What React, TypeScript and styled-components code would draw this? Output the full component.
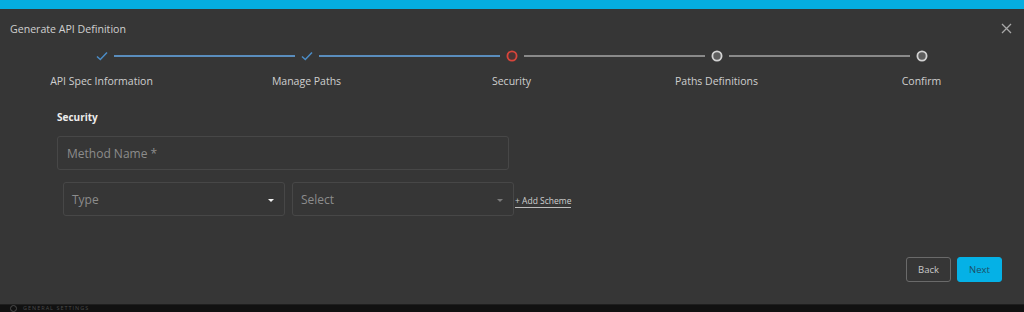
import React from 'react'
import styled, { createGlobalStyle } from 'styled-components'

const GlobalStyle = createGlobalStyle`
  html, body {
    margin: 0;
    padding: 0;
    background: #0d0d0d;
  }
  body {
    font-family: 'Open Sans', 'Noto Sans', sans-serif;
  }
`

const Page = styled.div`
  display: flex;
  flex-direction: column;
  width: 1024px;
  height: 312px;
  overflow: hidden;
`

const TopBar = styled.div`
  height: 9px;
  flex-shrink: 0;
  background: #05ade0;
`

const Dialog = styled.div`
  flex: 1;
  display: flex;
  flex-direction: column;
  background: #363636;
  color: #d6d6d6;
`

const DialogHeader = styled.div`
  display: flex;
  justify-content: space-between;
  align-items: center;
  height: 20px;
  padding: 10px 12px 0 10px;
`

const DialogTitle = styled.div`
  font-size: 10.6px;
  color: #d0d0d0;
`

const CloseButton = styled.button`
  display: flex;
  padding: 0;
  margin-top: -2px;
  border: none;
  background: none;
  cursor: pointer;
`

const Stepper = styled.div`
  display: grid;
  grid-template-columns: repeat(5, 205px);
  margin-left: -1px;
  margin-top: 11px;
`

const Step = styled.div`
  display: flex;
  flex-direction: column;
  align-items: center;
`

const StepTrack = styled.div`
  display: flex;
  align-items: center;
  width: 100%;
  height: 12px;
`

const Connector = styled.div<{ $active: boolean; $hidden: boolean }>`
  flex: 1;
  height: 2px;
  background: ${(p) => (p.$hidden ? 'transparent' : p.$active ? '#5a8dbd' : '#8a8a8a')};
`

const IconSlot = styled.div`
  display: flex;
  align-items: center;
  justify-content: center;
  width: 24px;
  height: 12px;
`

const StepLabel = styled.div`
  margin-top: 12px;
  font-size: 10.5px;
  color: #cfcfcf;
`

const Form = styled.div`
  display: flex;
  flex-direction: column;
  padding: 22px 0 0 57px;
`

const SectionTitle = styled.div`
  font-size: 10px;
  font-weight: 700;
  color: #ececec;
`

const TextInput = styled.div`
  display: flex;
  align-items: center;
  box-sizing: border-box;
  width: 452px;
  height: 34px;
  margin-top: 12px;
  padding-left: 9px;
  border: 1px solid #474747;
  border-radius: 3px;
  font-size: 12px;
  color: #8c8c8c;
`

const SchemeRow = styled.div`
  display: flex;
  align-items: center;
  gap: 7px;
  margin-top: 12px;
  margin-left: 6px;
`

const SelectBox = styled.div`
  display: flex;
  align-items: center;
  justify-content: space-between;
  box-sizing: border-box;
  width: 222px;
  height: 34px;
  padding: 0 10px 0 8px;
  border: 1px solid #474747;
  border-radius: 3px;
  font-size: 12px;
  color: #8c8c8c;
`

const Caret = styled.span<{ $bright: boolean }>`
  width: 0;
  height: 0;
  border-left: 3.5px solid transparent;
  border-right: 3.5px solid transparent;
  border-top: 3.5px solid ${(p) => (p.$bright ? '#f2f2f2' : '#7a7a7a')};
  margin-top: 2px;
`

const AddScheme = styled.span`
  align-self: center;
  margin: 4px 0 0 -6px;
  padding-bottom: 1px;
  border-bottom: 1px solid #bdbdbd;
  font-size: 8.5px;
  color: #cfcfcf;
  cursor: pointer;
`

const Actions = styled.div`
  display: flex;
  justify-content: flex-end;
  gap: 6px;
  margin-top: auto;
  padding: 0 22px 22px 0;
`

const ActionButton = styled.button<{ $primary?: boolean }>`
  box-sizing: border-box;
  width: 45px;
  height: 25px;
  border-radius: 3px;
  font-family: inherit;
  font-size: 9.5px;
  cursor: pointer;
  border: 1px solid ${(p) => (p.$primary ? '#05b1e6' : '#6a6a6a')};
  background: ${(p) => (p.$primary ? '#05b1e6' : 'transparent')};
  color: ${(p) => (p.$primary ? '#1d4f66' : '#c9c9c9')};
`

const Footer = styled.div`
  display: flex;
  align-items: center;
  gap: 6px;
  height: 8px;
  flex-shrink: 0;
  overflow: hidden;
  background: #111;
  border-top: 1px solid #1e1e1e;
  box-sizing: border-box;
  padding-left: 10px;
  font-size: 5.5px;
  letter-spacing: 1px;
  color: #4a4a4a;
  line-height: 7px;
`

const FooterDot = styled.span`
  width: 5px;
  height: 5px;
  border-radius: 50%;
  border: 1px solid #4a4a4a;
`

type StepState = 'done' | 'error' | 'todo'

const steps: Array<{ label: string; state: StepState }> = [
  { label: 'API Spec Information', state: 'done' },
  { label: 'Manage Paths', state: 'done' },
  { label: 'Security', state: 'error' },
  { label: 'Paths Definitions', state: 'todo' },
  { label: 'Confirm', state: 'todo' },
]
const activeStep = 2

const StepIcon = ({ state }: { state: StepState }) => {
  if (state === 'done') {
    return (
      <svg width="12" height="10" viewBox="0 0 12 10">
        <path d="M1 5.5 L4.3 8.5 L11 1.5" fill="none" stroke="#4b8cc6" strokeWidth="1.5" />
      </svg>
    )
  }
  if (state === 'error') {
    return (
      <svg width="12" height="12" viewBox="0 0 12 12">
        <circle cx="6" cy="6" r="4.6" fill="#4a3434" stroke="#d8453b" strokeWidth="1.8" />
      </svg>
    )
  }
  return (
    <svg width="12" height="12" viewBox="0 0 12 12">
      <circle cx="6" cy="6" r="4.6" fill="#5e5e5e" stroke="#d2d2d2" strokeWidth="1.8" />
    </svg>
  )
}

export default function App() {
  return (
    <Page>
      <GlobalStyle />
      <TopBar />
      <Dialog>
        <DialogHeader>
          <DialogTitle>Generate API Definition</DialogTitle>
          <CloseButton aria-label="Close">
            <svg width="11" height="11" viewBox="0 0 11 11">
              <path d="M1 1 L10 10 M10 1 L1 10" stroke="#a8a8a8" strokeWidth="1.3" />
            </svg>
          </CloseButton>
        </DialogHeader>

        <Stepper>
          {steps.map((step, i) => (
            <Step key={step.label}>
              <StepTrack>
                <Connector $hidden={i === 0} $active={i <= activeStep} />
                <IconSlot>
                  <StepIcon state={step.state} />
                </IconSlot>
                <Connector $hidden={i === steps.length - 1} $active={i + 1 <= activeStep} />
              </StepTrack>
              <StepLabel>{step.label}</StepLabel>
            </Step>
          ))}
        </Stepper>

        <Form>
          <SectionTitle>Security</SectionTitle>
          <TextInput>Method Name *</TextInput>
          <SchemeRow>
            <SelectBox>
              Type
              <Caret $bright />
            </SelectBox>
            <SelectBox>
              Select
              <Caret $bright={false} />
            </SelectBox>
            <AddScheme>+ Add Scheme</AddScheme>
          </SchemeRow>
        </Form>

        <Actions>
          <ActionButton>Back</ActionButton>
          <ActionButton $primary>Next</ActionButton>
        </Actions>
      </Dialog>
      <Footer>
        <FooterDot />
        GENERAL SETTINGS
      </Footer>
    </Page>
  )
}
